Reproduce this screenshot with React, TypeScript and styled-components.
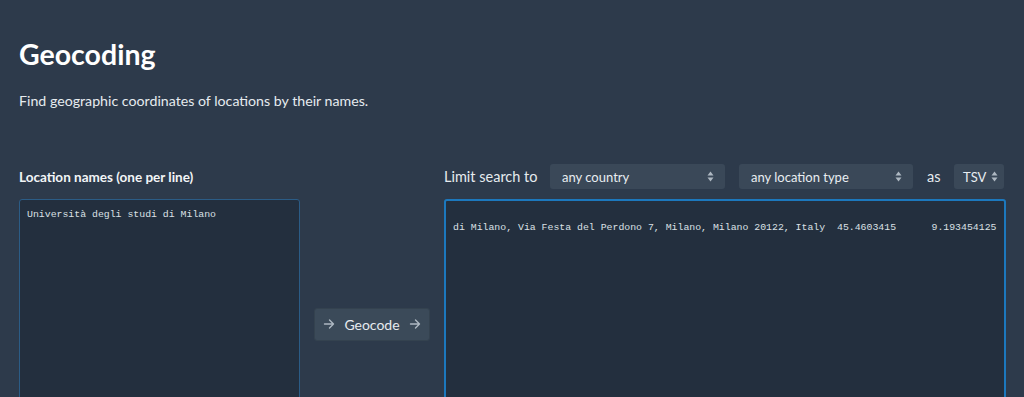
import React from 'react'
import styled, { createGlobalStyle } from 'styled-components'

const GlobalStyle = createGlobalStyle`
  html, body {
    margin: 0;
    padding: 0;
    background: #2d3a4b;
    overflow: hidden;
  }
  body {
    font-family: Lato, 'Noto Sans', sans-serif;
    color: #e6ebef;
  }
`

const Page = styled.main({
  padding: '32px 18px 0 19px',
})

const Title = styled.h1({
  margin: 0,
  fontSize: '28.5px',
  lineHeight: '44px',
  fontWeight: 700,
  color: '#ffffff',
})

const Lead = styled.p({
  margin: '14px 0 0',
  fontSize: '14.2px',
  lineHeight: '22px',
  color: '#e6ebef',
})

const Workspace = styled.section({
  display: 'grid',
  gridTemplateColumns: '281px 1fr 562px',
  gridTemplateRows: '25px 250px',
  columnGap: '14px',
  rowGap: '10px',
  marginTop: '52px',
})

const FieldLabel = styled.label({
  alignSelf: 'center',
  fontSize: '13.5px',
  fontWeight: 700,
  color: '#f2f5f7',
  whiteSpace: 'nowrap',
})

const Controls = styled.div({
  gridColumn: '3',
  display: 'flex',
  alignItems: 'center',
  gap: '14px',
})

const ControlText = styled.span<{ $width: number }>`
  flex-shrink: 0;
  width: ${(p) => p.$width}px;
  white-space: nowrap;
  font-size: 14.5px;
  color: #e6ebef;
`

const SelectBox = styled.div<{ $width: number; $compact?: boolean }>`
  box-sizing: border-box;
  flex-shrink: 0;
  width: ${(p) => p.$width}px;
  height: 25px;
  display: flex;
  align-items: center;
  justify-content: space-between;
  gap: 3px;
  padding: ${(p) => (p.$compact ? '0 6px 0 9px' : '0 11px 0 12px')};
  background: #3a4858;
  border-radius: 3px;
  font-size: 13px;
  color: #e8edf1;
  white-space: nowrap;
`

const Editor = styled.div<{ $focused?: boolean }>`
  box-sizing: border-box;
  height: 100%;
  background: #232f3e;
  border: ${(p) => (p.$focused ? '2px solid #1c78bd' : '1px solid #2b5c86')};
  border-radius: 3px;
  padding: 9px 7px;
  font-family: 'Liberation Mono', 'Courier New', monospace;
  font-size: 9.85px;
  line-height: 12px;
  color: #dbe0e5;
  white-space: pre;
  overflow: hidden;
`

const Middle = styled.div({
  display: 'flex',
  alignItems: 'center',
  justifyContent: 'center',
})

const GeocodeButton = styled.button({
  boxSizing: 'border-box',
  width: '116px',
  height: '33px',
  display: 'flex',
  alignItems: 'center',
  justifyContent: 'center',
  gap: '9px',
  background: '#3b4a59',
  border: '1px solid #34424f',
  borderRadius: '3px',
  color: '#e6ebef',
  fontFamily: "Lato, 'Noto Sans', sans-serif",
  fontSize: '14px',
  cursor: 'pointer',
  padding: 0,
})

function Arrow(): JSX.Element {
  return (
    <svg width="12" height="12" viewBox="0 0 12 12" fill="none" stroke="#aeb8c2" strokeWidth="1.4" strokeLinecap="round" strokeLinejoin="round">
      <path d="M1.5 6h9M6.5 2l4 4-4 4" />
    </svg>
  )
}

function UpDown(): JSX.Element {
  return (
    <svg width="7" height="11" viewBox="0 0 7 11" fill="#aeb8c2" style={{ flexShrink: 0 }}>
      <path d="M3.5 0.5L6.5 4.5H0.5Z" />
      <path d="M3.5 10.5L6.5 6.5H0.5Z" />
    </svg>
  )
}

function Select({ width, value, compact }: { width: number; value: string; compact?: boolean }): JSX.Element {
  return (
    <SelectBox $width={width} $compact={compact}>
      <span>{value}</span>
      <UpDown />
    </SelectBox>
  )
}

export default function App(): JSX.Element {
  return (
    <Page>
      <GlobalStyle />
      <Title>Geocoding</Title>
      <Lead>Find geographic coordinates of locations by their names.</Lead>
      <Workspace>
        <FieldLabel>Location names (one per line)</FieldLabel>
        <Controls>
          <ControlText $width={92}>Limit search to</ControlText>
          <Select width={175} value="any country" />
          <Select width={174} value="any location type" />
          <ControlText $width={13}>as</ControlText>
          <Select width={50} value="TSV" compact />
        </Controls>
        <Editor>Università degli studi di Milano</Editor>
        <Middle>
          <GeocodeButton>
            <Arrow />
            Geocode
            <Arrow />
          </GeocodeButton>
        </Middle>
        <Editor $focused>{'\n' + 'di Milano, Via Festa del Perdono 7, Milano, Milano 20122, Italy  45.4603415      9.193454125'}</Editor>
      </Workspace>
    </Page>
  )
}
